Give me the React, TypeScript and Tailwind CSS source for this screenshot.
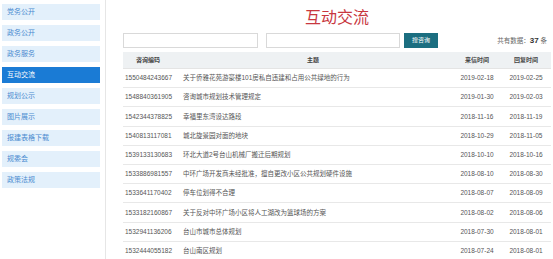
import React from "react";

const menu = ["党务公开", "政务公开", "政务服务", "互动交流", "规划公示", "图片展示", "报建表格下载", "规委会", "政策法规"];

const rows: [string, string, string, string][] = [
  ["1550484243667", "关于侨雅花苑游豪楼101房私自违建和占用公共绿地的行为", "2019-02-18", "2019-02-25"],
  ["1548840361905", "咨询城市规划技术管理规定", "2019-01-30", "2019-02-03"],
  ["1542344378825", "幸福里东湾设达路段", "2018-11-16", "2018-11-19"],
  ["1540813117081", "城北旋景园对面的地块", "2018-10-29", "2018-11-05"],
  ["1539133130683", "环北大道2号台山机械厂搬迁后期规划", "2018-10-10", "2018-10-16"],
  ["1533886981557", "中环广场开发商未经批准，擅自更改小区公共规划硬件设施", "2018-08-10", "2018-08-30"],
  ["1533641170402", "停车位划得不合理", "2018-08-07", "2018-08-09"],
  ["1533182160867", "关于反对中环广场小区将人工湖改为篮球场的方案", "2018-08-02", "2018-08-06"],
  ["1532941136206", "台山市城市总体规划", "2018-07-30", "2018-08-01"],
  ["1532444055182", "台山南区规划", "2018-07-24", "2018-08-01"],
];

export default function App() {
  return (
    <div
      className="w-[553px] h-[259px] bg-white flex overflow-hidden"
      style={{ fontFamily: '"Liberation Sans", "Noto Sans CJK SC", sans-serif' }}
    >
      <div className="w-[106px] h-full border-r border-[#e6e6e6] pl-[2px] pt-[4px] flex flex-col gap-[5px] shrink-0">
        {menu.map((m) => (
          <div
            key={m}
            className={
              m === "互动交流"
                ? "w-[98px] h-[16px] bg-[#1a7bd5] text-white text-[7px] leading-[16px] pl-[5px]"
                : "w-[98px] h-[16px] bg-[#e3f0fb] text-[#4a8bd0] text-[7px] leading-[16px] pl-[5px]"
            }
          >
            {m}
          </div>
        ))}
      </div>
      <div className="flex-1 pl-[17px] flex flex-col">
        <div className="w-[428px] flex flex-col">
          <div className="h-[16px] mt-[10px] text-center text-[16px] leading-[16px] text-[#c8373f]">互动交流</div>
          <div className="flex items-center mt-[7px] h-[15px]">
            <div className="w-[135px] h-[15px] border border-[#d9d9d9] bg-white" />
            <div className="w-[134px] h-[15px] border border-[#d9d9d9] bg-white ml-[8px]" />
            <div className="w-[34px] h-[15px] bg-[#1b6e80] text-white text-[6px] leading-[15px] text-center ml-[4px]">搜咨询</div>
            <div className="flex-1 text-right pr-[4px] text-[6.5px] text-[#666] leading-[15px]">
              共有数据：<span className="font-bold text-[8px] text-[#333]">37</span> 条
            </div>
          </div>
          <div className="mt-[4px] h-[17px] bg-[#eef1f3] flex items-center text-[6px] font-bold text-[#444] border-b border-[#e4e4e4]">
            <div className="w-[50px] text-center">咨询编码</div>
            <div className="w-[280px] text-center">主题</div>
            <div className="w-[48px] text-center">来信时间</div>
            <div className="w-[50px] text-center">回复时间</div>
          </div>
          {rows.map((r) => (
            <div key={r[0]} className="h-[19.2px] flex items-center text-[6.5px] text-[#555] border-b border-[#e8e8e8]">
              <div className="w-[50px] pl-[2px]">{r[0]}</div>
              <div className="w-[280px] pl-[10px] whitespace-nowrap overflow-hidden">{r[1]}</div>
              <div className="w-[48px] text-center">{r[2]}</div>
              <div className="w-[50px] text-center">{r[3]}</div>
            </div>
          ))}
        </div>
      </div>
    </div>
  );
}
